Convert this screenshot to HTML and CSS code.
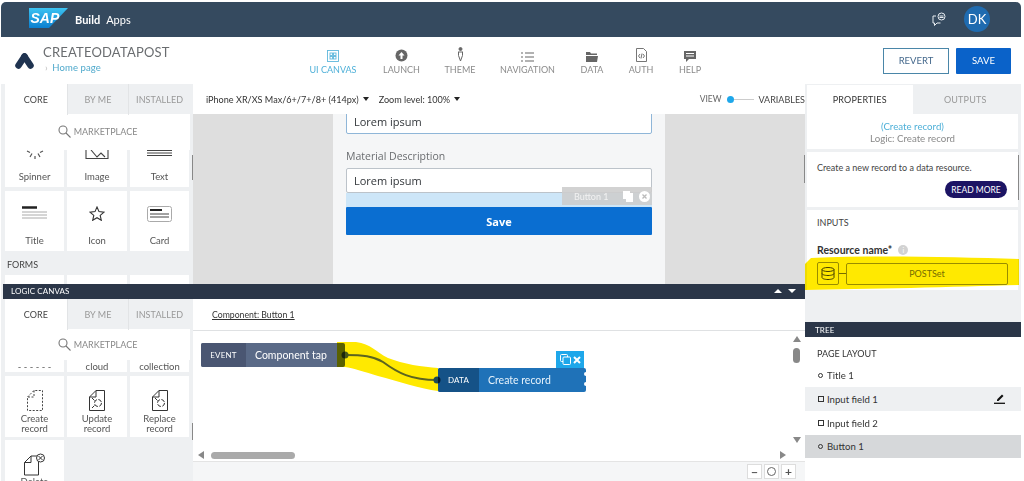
FILE: index.html
```html
<!DOCTYPE html>
<html lang="en">
<head>
<meta charset="utf-8">
<title>SAP Build Apps</title>
<link rel="stylesheet" href="styles.css">
</head>
<body>
<div class="app">
  <header class="topbar">
    <svg class="sap-logo" width="40" height="20" viewBox="0 0 40 20"><defs><linearGradient id="sapg" x1="0" y1="0" x2="0" y2="1"><stop offset="0" stop-color="#3cc3f2"/><stop offset="1" stop-color="#0a7fd0"/></linearGradient></defs><polygon points="0,0 39,0 20,20 0,20" fill="url(#sapg)"/><text x="1.5" y="15" class="sap-text">SAP</text></svg>
    <span class="brand-a">Build</span><span class="brand-b">Apps</span>
    <span class="spacer"></span>
    <svg class="chat-icon" width="16" height="15" viewBox="0 0 16 15" fill="none" stroke="#e8edf2" stroke-width="1"><path d="M5 4H2v7h1.500v2.500L6 11h3.500"/><circle cx="10.500" cy="4.500" r="3.500"/><path d="M8.500 4h4M8.500 5.500h4"/></svg>
    <span class="avatar">DK</span>
  </header>

  <nav class="toolbar">
    <svg class="app-logo" width="19" height="16" viewBox="0 0 19 16"><path d="M9.500 3.500L3.500 12.500" stroke="#1f3350" stroke-width="6.500" stroke-linecap="round"/><path d="M9.500 3.500L15.500 12.500" stroke="#1f3350" stroke-width="6.500" stroke-linecap="round"/></svg>
    <div class="app-title">
      <div class="app-name">CREATEODATAPOST</div>
      <div class="crumb"><span class="crumb-arrow">›</span> Home page</div>
    </div>
    <div class="nav-items">
      <div class="nav-item active"><svg width="12" height="12" viewBox="0 0 12 12" fill="none" stroke="#5fb8dc" stroke-width=".9"><rect x=".5" y=".5" width="11" height="11"/><rect x="3" y="3" width="2.500" height="2.500"/><rect x="6.500" y="3" width="2.500" height="2.500"/><rect x="3" y="6.500" width="2.500" height="2.500"/><rect x="6.500" y="6.500" width="2.500" height="2.500"/></svg><span>UI CANVAS</span></div>
      <div class="nav-item w-launch"><svg width="13" height="13" viewBox="0 0 13 13"><circle cx="6.500" cy="6.500" r="6" fill="#666"/><path d="M6.500 3L3.500 6.500h2V10h2V6.500h2z" fill="#fff"/></svg><span>LAUNCH</span></div>
      <div class="nav-item w-theme"><svg width="9" height="15" viewBox="0 0 9 15" fill="none" stroke="#666"><circle cx="4.500" cy="2" r="1.500" fill="#666"/><path d="M2 5h5M2.500 5v3.500L4.500 14l2-5.500V5"/></svg><span>THEME</span></div>
      <div class="nav-item w-nav"><svg width="13" height="10" viewBox="0 0 13 10" stroke="#666" stroke-width="1.200"><path d="M0 1h2M4 1h9M0 5h2M4 5h9M0 9h2M4 9h9"/></svg><span>NAVIGATION</span></div>
      <div class="nav-item w-data"><svg width="12" height="10" viewBox="0 0 12 10"><path d="M0 0h4l1 1.500h6V3H0zM0 4h12l-1 6H0z" fill="#666"/></svg><span>DATA</span></div>
      <div class="nav-item w-auth"><svg width="11" height="14" viewBox="0 0 11 14" fill="none" stroke="#666" stroke-width=".9"><path d="M.5.500h7l3 3v10h-10z"/><path d="M4 6L2.500 8 4 10M7 6l1.500 2L7 10M6 5.500L5 10.500"/></svg><span>AUTH</span></div>
      <div class="nav-item w-help"><svg width="12" height="11" viewBox="0 0 12 11"><path d="M0 0h12v8H5l-3 3V8H0z" fill="#666"/><path d="M2 2.500h8M2 5h8" stroke="#fff"/></svg><span>HELP</span></div>
    </div>
    <div class="actions">
      <button class="btn-revert">REVERT</button>
      <button class="btn-save">SAVE</button>
    </div>
  </nav>

  <div class="workspace">
    <div class="main">
      <section class="row-top">
        <aside class="palette">
          <div class="tabs"><span class="tab on">CORE</span><span class="tab">BY ME</span><span class="tab">INSTALLED</span></div>
          <div class="market"><svg width="13" height="13" viewBox="0 0 13 13" fill="none" stroke="#777" stroke-width="1.100"><circle cx="5" cy="5" r="4"/><path d="M8 8l4.500 4.500"/></svg>MARKETPLACE</div>
          <div class="grid">
            <div class="cell short end"><svg width="18" height="9" viewBox="0 0 18 9" stroke="#555" stroke-width="1.200"><path d="M1 1l3 1.500M17 1l-3 1.500M6 3.500L4 7M12 3.500l2 3.500M9 6v3"/></svg><span>Spinner</span></div>
            <div class="cell short end"><svg width="24" height="9" viewBox="0 0 24 9" fill="none" stroke="#444" stroke-width="1.100"><path d="M1 0v8.500h22V0M6 0l6 7 4-4 4 4"/></svg><span>Image</span></div>
            <div class="cell short end"><svg width="25" height="7" viewBox="0 0 25 7" stroke="#444"><path d="M0 .5h25M0 3h25M0 5.500h25"/></svg><span>Text</span></div>
            <div class="cell"><svg width="25" height="13" viewBox="0 0 25 13"><path d="M0 1.500h15" stroke="#222" stroke-width="2.500"/><path d="M0 6h25M0 9h25M0 12h25" stroke="#aaa"/></svg><span>Title</span></div>
            <div class="cell"><svg width="16" height="15" viewBox="0 0 16 15" fill="none" stroke="#333" stroke-width="1.100"><path d="M8 1l2 4.600 5 .5-3.800 3.300 1.100 4.900L8 11.700l-4.300 2.600 1.100-4.900L1 6.100l5-.5z"/></svg><span>Icon</span></div>
            <div class="cell"><svg width="25" height="16" viewBox="0 0 25 16"><rect x=".5" y=".5" width="24" height="15" rx="2" fill="#fff" stroke="#aaa"/><path d="M3 4h12" stroke="#222" stroke-width="2"/><path d="M3 8h19M3 11h19" stroke="#444"/></svg><span>Card</span></div>
          </div>
          <div class="section-label">FORMS</div>
          <div class="grid"><div class="cell stub"></div><div class="cell stub"></div><div class="cell stub"></div></div>
        </aside>
        <div class="canvas">
          <div class="canvas-bar">
            <span class="device">iPhone XR/XS Max/6+/7+/8+ (414px)<i class="caret"></i></span>
            <span class="zoom-level">Zoom level: 100%<i class="caret"></i></span>
            <span class="spacer"></span>
            <span class="view">VIEW<i class="dot"></i><i class="dash"></i></span>
            <span class="vars">VARIABLES</span>
          </div>
          <div class="stage">
            <div class="phone">
              <div class="field first">Lorem ipsum</div>
              <div class="field-label">Material Description</div>
              <div class="field">Lorem ipsum</div>
              <div class="selected-band"></div>
              <div class="save-wide">Save</div>
              <div class="sel-tag"><span>Button 1</span><svg width="11" height="11" viewBox="0 0 11 11"><path d="M0 0h7v2h3v9H3V8H0z" fill="#fff"/></svg><svg width="11" height="11" viewBox="0 0 11 11"><circle cx="5.500" cy="5.500" r="5.500" fill="#fff"/><path d="M3.500 3.500l4 4M7.500 3.500l-4 4" stroke="#bbb" stroke-width="1.300"/></svg></div>
            </div>
          </div>
          <i class="thumb-left"></i>
          <i class="thumb-right"></i>
        </div>
      </section>

      <div class="darkbar logic-bar"><span>LOGIC CANVAS</span><span class="arrows"><i class="up"></i><i class="down"></i></span></div>

      <section class="row-bottom">
        <aside class="palette">
          <div class="tabs"><span class="tab on">CORE</span><span class="tab">BY ME</span><span class="tab">INSTALLED</span></div>
          <div class="market low"><svg width="13" height="13" viewBox="0 0 13 13" fill="none" stroke="#777" stroke-width="1.100"><circle cx="5" cy="5" r="4"/><path d="M8 8l4.500 4.500"/></svg>MARKETPLACE</div>
          <div class="grid">
            <div class="cell tiny"><span>- - - - - -</span></div>
            <div class="cell tiny"><span>cloud</span></div>
            <div class="cell tiny"><span>collection</span></div>
            <div class="cell rec"><svg width="16" height="21" viewBox="0 0 16 21" fill="none" stroke="#444" stroke-dasharray="2 1.500"><path d="M.5 7L7 .5h8.500v20H.5zM7 .5V7H.5"/></svg><span>Create record</span></div>
            <div class="cell rec"><svg width="16" height="21" viewBox="0 0 16 21" fill="none" stroke="#333"><path d="M.5 7L7 .5h8.500v20H.5zM7 .5V7H.5"/><circle cx="9" cy="13" r="3.500" stroke-dasharray="4 1.500"/><path d="M3 8l2.500 2.500M3 18l2.500-2.500"/></svg><span>Update record</span></div>
            <div class="cell rec"><svg width="16" height="21" viewBox="0 0 16 21" fill="none" stroke="#333"><path d="M.5 7L7 .5h8.500v20H.5zM7 .5V7H.5"/><circle cx="9" cy="13" r="3.500" stroke-dasharray="4 1.500"/><path d="M3 8l2.500 2.500"/></svg><span>Replace record</span></div>
            <div class="cell rec last"><svg width="24" height="24" viewBox="0 0 24 24" fill="none" stroke="#333"><path d="M1.500 10.500L8 4h7.500v19H1.500zM8 4v6.500H1.500"/><circle cx="17.500" cy="6" r="4" fill="#fff"/><path d="M15.500 4l4 4M19.500 4l-4 4"/></svg><span>Delete record</span></div>
          </div>
        </aside>
        <div class="logic">
          <i class="thumb-low"></i>
          <div class="logic-head"><span class="component-link">Component: Button 1</span></div>
          <div class="logic-area">
            <div class="nodes">
              <div class="node event"><span class="node-kind">EVENT</span><span class="node-name">Component tap</span></div>
              <div class="node data">
                <div class="node-tools"><svg width="11" height="11" viewBox="0 0 11 11" fill="none" stroke="#fff"><rect x=".5" y=".5" width="7" height="7" rx="1"/><rect x="3" y="3" width="7.500" height="7.500" rx="1" fill="#1ea7ea"/></svg><svg width="8" height="8" viewBox="0 0 8 8" stroke="#fff" stroke-width="2"><path d="M1 1l6 6M7 1L1 7"/></svg></div>
                <span class="node-kind">DATA</span><span class="node-name">Create record</span>
                <i class="notch n1"></i><i class="notch n2"></i>
              </div>
            </div>
            <svg class="wire" width="260" height="70" viewBox="0 0 260 70" fill="none">
              <path d="M144 11H163C178 13 183 21 195 27 210 33 230 36 245 37V60C228 58 205 50 185 45 172 41 160 37 152 36H144z" fill="#ffe900"/>
              <path d="M152 24C170 24 180 25 190 31 205 42 218 49 244 49" stroke="#5c6420" stroke-width="2"/>
              <circle cx="152" cy="24" r="3.500" fill="#4a5a18"/><circle cx="244" cy="49" r="3.500" fill="#1c4a55"/>
            </svg>
            <i class="arrow-v up-a"></i><i class="thumb-v"></i><i class="arrow-v down-a"></i>
            <i class="thumb-h"></i><i class="arrow-h left-a"></i><i class="arrow-h right-a"></i>
          </div>
          <div class="zoom-ctl"><span>−</span><span class="circle"></span><span>+</span></div>
        </div>
      </section>
    </div>

    <aside class="side">
      <div class="side-tabs"><span class="side-tab on">PROPERTIES</span><span class="side-tab">OUTPUTS</span></div>
      <div class="side-card head-card"><div class="link">(Create record)</div><div class="sub">Logic: Create record</div></div>
      <div class="side-card desc-card"><p>Create a new record to a data resource.</p><button class="read-more">READ MORE</button><i class="thumb-side"></i></div>
      <div class="side-card input-card">
        <div class="inputs-title">INPUTS</div>
        <div class="res-label">Resource name* <i class="info">i</i></div>
        <div class="res-row">
          <span class="db"><svg width="14" height="13" viewBox="0 0 14 13" fill="none" stroke="#444"><ellipse cx="7" cy="2.500" rx="6" ry="2"/><path d="M1 2.500v8c0 1.100 2.700 2 6 2s6-.9 6-2v-8M1 6.500c0 1.100 2.700 2 6 2s6-.9 6-2"/></svg></span>
          <i class="res-link"></i>
          <span class="res-value">POSTSet</span>
        </div>
        <svg class="marker" width="216" height="36" viewBox="0 0 216 36" preserveAspectRatio="none"><path d="M6 3C70 0 150 2 214 4V30C150 32 60 34 0 35V9z" fill="#ffe900"/></svg>
      </div>
      <div class="darkbar tree-bar">TREE</div>
      <div class="tree">
        <div class="tree-title">PAGE LAYOUT</div>
        <div class="tree-row"><i class="bullet"></i>Title 1</div>
        <div class="tree-row hover"><i class="square"></i>Input field 1<svg class="pen" width="11" height="11" viewBox="0 0 11 11"><path d="M3 6.500L8 1.500l1.500 1.500-5 5H3z" fill="#111"/><path d="M0 10.300h11" stroke="#111" stroke-width="1.300"/></svg></div>
        <div class="tree-row"><i class="square"></i>Input field 2</div>
        <div class="tree-row current"><i class="bullet"></i>Button 1</div>
      </div>
    </aside>
  </div>
</div>
</body>
</html>
```
FILE: styles.css
```css
* { box-sizing: border-box; }
html, body { margin: 0; height: 481px; overflow: hidden; background: #fff; }
body { font-family: "Lato", "Open Sans", sans-serif; color: #444; }
i { font-style: normal; display: block; }
svg { display: block; flex: none; }
button { font-family: inherit; cursor: pointer; }
.spacer { flex: 1; }

.app { height: 481px; display: flex; flex-direction: column; padding: 2px 3px 0 1px; }

.topbar { height: 35px; flex: none; background: #354a5f; border-radius: 5px 5px 0 0; display: flex; align-items: center; padding: 0 31px 0 28px; color: #fff; }
.sap-logo { margin-right: 6px; margin-top: -4px; }
.sap-text { font: italic 700 14px "Liberation Sans", sans-serif; fill: #fff; }
.brand-a { font-size: 11px; font-weight: 700; margin-right: 6px; }
.brand-b { font-size: 11px; }
.chat-icon { margin-right: 17px; }
.avatar { width: 26px; height: 26px; border-radius: 50%; background: #1f6bb0; font-size: 13px; display: flex; align-items: center; justify-content: center; margin-top: -1px; }

.toolbar { height: 47px; flex: none; display: flex; align-items: center; padding-left: 14px; background: #fff; }
.app-logo { margin-right: 9px; }
.app-title { width: 266px; flex: none; }
.app-name { font-size: 13px; color: #6a6d70; letter-spacing: .2px; line-height: 15px; margin-top: -2px; }
.crumb { font-size: 9.500px; color: #4fa9cc; margin-top: 2px; line-height: 12px; letter-spacing: .1px; }
.crumb-arrow { color: #bbb; padding: 0 2px; }
.nav-items { display: flex; margin-top: -6px; }
.nav-item { display: flex; flex-direction: column; align-items: center; justify-content: flex-end; height: 34px; width: 45px; font-size: 9px; color: #8b8b8b; white-space: nowrap; }
.nav-item svg { margin: auto 0 2px; }
.nav-item.active { color: #4fb0d8; width: 48px; margin-right: 26px; }
.nav-item.w-launch { width: 37px; margin-right: 25px; }
.nav-item.w-theme { width: 30px; margin-right: 25px; }
.nav-item.w-nav { width: 55px; margin-right: 25px; }
.nav-item.w-data { width: 24px; margin-right: 25px; }
.nav-item.w-auth { width: 24px; margin-right: 26px; }
.nav-item.w-help { width: 22px; margin-right: 0; }
.actions { margin-left: auto; display: flex; gap: 7px; margin-right: 10px; }
.btn-revert { width: 66px; height: 26px; background: #fff; border: 1px solid #4a86a8; color: #44688c; font-size: 9.500px; padding: 0; }
.btn-save { width: 55px; height: 26px; background: #0a62c9; border: 0; color: #fff; font-size: 9.500px; padding: 0; border-radius: 1px; }

.workspace { flex: 1; min-height: 0; display: flex; padding-left: 2px; background: #eef0f2; }
.main { width: 802px; flex: none; display: flex; flex-direction: column; }
.row-top { height: 200px; display: flex; flex: none; overflow: hidden; }
.row-bottom { flex: 1; min-height: 0; display: flex; overflow: hidden; }

.palette { width: 190px; flex: none; background: #eef0f2; padding-right: 3px; overflow: hidden; }
.tabs { display: flex; height: 31px; padding-left: 2px; }
.tab { width: 62px; display: flex; align-items: center; justify-content: center; font-size: 9px; color: #999; letter-spacing: .1px; border-left: 1px solid #e2e4e6; }
.tab.on { background: #fff; color: #444; border: 0; }
.market { height: 36px; background: #fff; display: flex; align-items: center; justify-content: center; gap: 3px; font-size: 9px; color: #888; margin-left: 2px; margin-top: -1px; padding: 0 0 1px; }
.market.low { height: 31px; }
.grid { display: grid; grid-template-columns: 59px 60px 59px; column-gap: 3px; row-gap: 4px; padding-left: 2px; }
.cell { height: 60px; background: #fff; display: flex; flex-direction: column; align-items: center; font-size: 9.500px; color: #555; text-align: center; padding-top: 15px; overflow: hidden; }
.cell span { margin-top: auto; margin-bottom: 5px; }
.cell.short { height: 37px; padding-top: 0; }
.cell.stub { height: 12px; padding: 0; }
.section-label { height: 24px; display: flex; align-items: center; padding: 3px 0 0 4px; font-size: 9px; color: #444; }
.cell.tiny { height: 12px; padding: 0; }
.cell.tiny span { margin: auto 0 0; line-height: 11px; }
.cell.rec { padding-top: 14px; line-height: 10px; height: 61px; }
.cell.rec span { margin-bottom: 3px; padding: 0 12px; }
.cell.rec.last { padding-top: 12px; margin-top: -1px; }
.cell.rec.last span { margin-top: 1px; }

.canvas { flex: 1; background: #fff; display: flex; flex-direction: column; position: relative; min-width: 0; }
.canvas-bar { height: 30px; flex: none; display: flex; align-items: center; padding-left: 13px; font-size: 9.100px; color: #333; }
.device { display: flex; align-items: center; margin-right: 10px; }
.zoom-level { display: flex; align-items: center; }
.caret { width: 0; height: 0; border: 3.500px solid transparent; border-top: 4px solid #222; border-bottom: 0; margin-left: 4px; }
.view { display: flex; align-items: center; color: #666; font-size: 8.500px; margin-right: 5px; }
.dot { width: 7px; height: 7px; border-radius: 50%; background: #1ea7ea; margin-left: 5px; }
.dash { width: 20px; height: 1px; background: #ccc; }
.vars { font-size: 9px; color: #444; }
.stage { flex: 1; background: #dedede; display: flex; justify-content: center; overflow: hidden; min-height: 0; }
.phone { width: 332px; background: #f5f6f7; padding: 0 13px; margin-left: 0; margin-top: -5px; position: relative; flex: none; height: 180px; }
.field { height: 25px; background: #fff; border: 1px solid #bcc3ca; border-radius: 2px; font-size: 11px; color: #32363a; padding: 0 7px; display: flex; align-items: center; font-family: "Open Sans", sans-serif; }
.field.first { border-color: #8fb6d8; }
.field-label { font-size: 10.500px; color: #6a6d70; margin: 15px 0 5px; line-height: 14px; font-family: "Open Sans", sans-serif; }
.selected-band { height: 14px; background: #cde6f8; }
.save-wide { height: 28px; background: #0a6ed1; color: #fff; font-weight: 700; font-size: 11px; display: flex; align-items: center; justify-content: center; font-family: "Open Sans", sans-serif; border-radius: 1px; }
.sel-tag { position: absolute; left: 229px; top: 78px; width: 90px; height: 18px; background: rgba(205,205,205,.9); color: #f2f2f2; font-size: 9px; display: flex; align-items: center; padding-left: 12px; gap: 5px; }
.sel-tag span { margin-right: 9px; }
.thumb-left { position: absolute; left: -1px; top: 71px; width: 1px; height: 25px; background: #888; }
.thumb-right { position: absolute; right: 0; top: 71px; width: 1px; height: 28px; background: #888; }
.thumb-low { position: absolute; left: -1px; top: 124px; width: 1px; height: 17px; background: #888; }
.thumb-side { position: absolute; right: -1px; top: 3px; width: 1px; height: 45px; background: #888; }

.darkbar { background: #2b3648; color: #fff; font-size: 8px; display: flex; align-items: center; padding-left: 8px; letter-spacing: .1px; }
.logic-bar { height: 15px; flex: none; justify-content: space-between; padding: 0 9px 1px 8px; }
.arrows { display: flex; gap: 6px; }
.arrows .up { border: 4px solid transparent; border-bottom: 4px solid #fff; border-top: 0; }
.arrows .down { border: 4px solid transparent; border-top: 4px solid #fff; border-bottom: 0; }

.logic { flex: 1; background: #fff; display: flex; flex-direction: column; min-width: 0; position: relative; }
.logic-head { height: 32px; flex: none; border-bottom: 1px solid #dfe1e3; padding-left: 19px; display: flex; align-items: center; }
.component-link { font-size: 8.700px; color: #333; text-decoration: underline; }
.logic-area { flex: 1; position: relative; overflow: hidden; }
.nodes { padding: 12px 0 0 8px; }
.node { display: flex; align-items: stretch; height: 24px; border-radius: 2px; color: #fff; }
.node-kind { display: flex; align-items: center; justify-content: center; font-size: 8px; letter-spacing: .2px; }
.node-name { display: flex; align-items: center; font-size: 10.500px; }
.event { width: 144px; background: #5a6a87; }
.event .node-kind { width: 45px; background: #4a5672; border-radius: 2px 0 0 2px; }
.event .node-name { padding-left: 9px; }
.data { width: 148px; background: #1f72b8; margin: 1px 0 0 237px; position: relative; }
.data .node-kind { width: 41px; background: #155287; border-radius: 2px 0 0 2px; }
.data .node-name { padding-left: 9px; color: #e6f2fb; }
.node-tools { position: absolute; right: 2px; top: -17px; width: 28px; height: 17px; background: #1ea7ea; display: flex; align-items: center; justify-content: center; gap: 2px; }
.notch { position: absolute; right: -2px; width: 4px; height: 4px; border-radius: 50%; background: #fff; }
.n1 { top: 4px; }
.n2 { top: 14px; }
.wire { position: absolute; left: 0; top: 0; mix-blend-mode: multiply; }
.arrow-v { position: absolute; right: 4px; width: 0; height: 0; border: 4px solid transparent; }
.up-a { top: 5px; border-bottom: 6px solid #888; border-top: 0; }
.down-a { bottom: 18px; border-top: 6px solid #888; border-bottom: 0; }
.thumb-v { position: absolute; right: 5px; top: 17px; width: 7px; height: 15px; border-radius: 4px; background: #888; }
.thumb-h { position: absolute; left: 18px; bottom: 2px; width: 84px; height: 7px; border-radius: 4px; background: #aaa; }
.arrow-h { position: absolute; bottom: 2px; width: 0; height: 0; border: 4px solid transparent; }
.left-a { left: 5px; border-right: 6px solid #888; border-left: 0; }
.right-a { right: 19px; border-left: 6px solid #888; border-right: 0; }
.zoom-ctl { height: 20px; flex: none; background: #f5f6f7; border-top: 1px solid #e4e4e4; display: flex; justify-content: flex-end; align-items: center; gap: 2px; padding-right: 9px; }
.zoom-ctl span { width: 15px; height: 15px; background: #fff; border: 1px solid #ddd; display: flex; align-items: center; justify-content: center; font-size: 12px; font-weight: 700; color: #555; }
.zoom-ctl .circle::before { content: ""; width: 7px; height: 7px; border: 1px solid #666; border-radius: 50%; }

.side { width: 216px; flex: none; display: flex; flex-direction: column; background: #eef0f2; }
.side-tabs { height: 30px; flex: none; display: flex; padding: 1px 3px 0 2px; }
.side-tab { flex: 1; display: flex; align-items: center; justify-content: center; font-size: 9px; color: #999; letter-spacing: .2px; }
.side-tab.on { background: #fff; color: #333; }
.side-card { background: #fff; margin: 0 3px 3px 2px; }
.head-card { height: 35px; text-align: center; font-size: 9.700px; line-height: 12px; padding-top: 6px; }
.link { color: #4fb0d8; }
.sub { color: #8a8a8a; }
.desc-card { height: 55px; padding: 10px 11px 0 10px; position: relative; font-size: 9px; color: #444; }
.desc-card p { margin: 0; line-height: 12px; }
.read-more { display: block; margin: 7px 0 0 auto; width: 62px; height: 17px; border-radius: 9px; background: #1c1464; color: #fff; border: 0; font-size: 8.500px; padding: 0; }
.input-card { height: 80px; margin-bottom: 32px; padding: 7px 0 0 10px; position: relative; }
.inputs-title { font-size: 9px; color: #444; line-height: 11px; }
.res-label { font-size: 10.500px; font-weight: 700; color: #333; margin-top: 16px; line-height: 12px; display: flex; align-items: center; gap: 3px; }
.info { width: 10px; height: 10px; border-radius: 50%; background: #d2d2d2; color: #fff; font-size: 7px; text-align: center; line-height: 10px; margin-left: 3px; font-weight: 400; }
.res-row { display: flex; align-items: center; margin-top: 6px; margin-right: 10px; position: relative; z-index: 0; }
.db { width: 22px; height: 23px; border: 1px solid #999; border-radius: 2px; display: flex; align-items: center; justify-content: center; }
.res-link { width: 7px; height: 1px; background: #777; }
.res-value { flex: 1; height: 22px; border: 1px solid #999; border-radius: 2px; display: flex; align-items: center; justify-content: center; font-size: 9px; color: #777; }
.marker { position: absolute; left: -2px; top: 45px; mix-blend-mode: multiply; }
.tree-bar { height: 15px; flex: none; padding-left: 10px; }
.tree { flex: 1; background: #fff; padding-top: 7px; }
.tree-title { font-size: 9px; color: #333; padding: 4px 0 0 12px; line-height: 11px; height: 19px; }
.tree-row { height: 24px; display: flex; align-items: center; padding-left: 13px; font-size: 9.600px; color: #333; position: relative; gap: 3px; }
.tree-row.hover { background: #eef0f2; }
.tree-row.current { background: #d6d8da; height: 23px; }
.bullet { width: 5px; height: 5px; border: 1px solid #333; border-radius: 50%; margin-right: 1px; }
.square { width: 6px; height: 6px; border: 1px solid #333; }
.pen { position: absolute; right: 16px; top: 6px; }
```
